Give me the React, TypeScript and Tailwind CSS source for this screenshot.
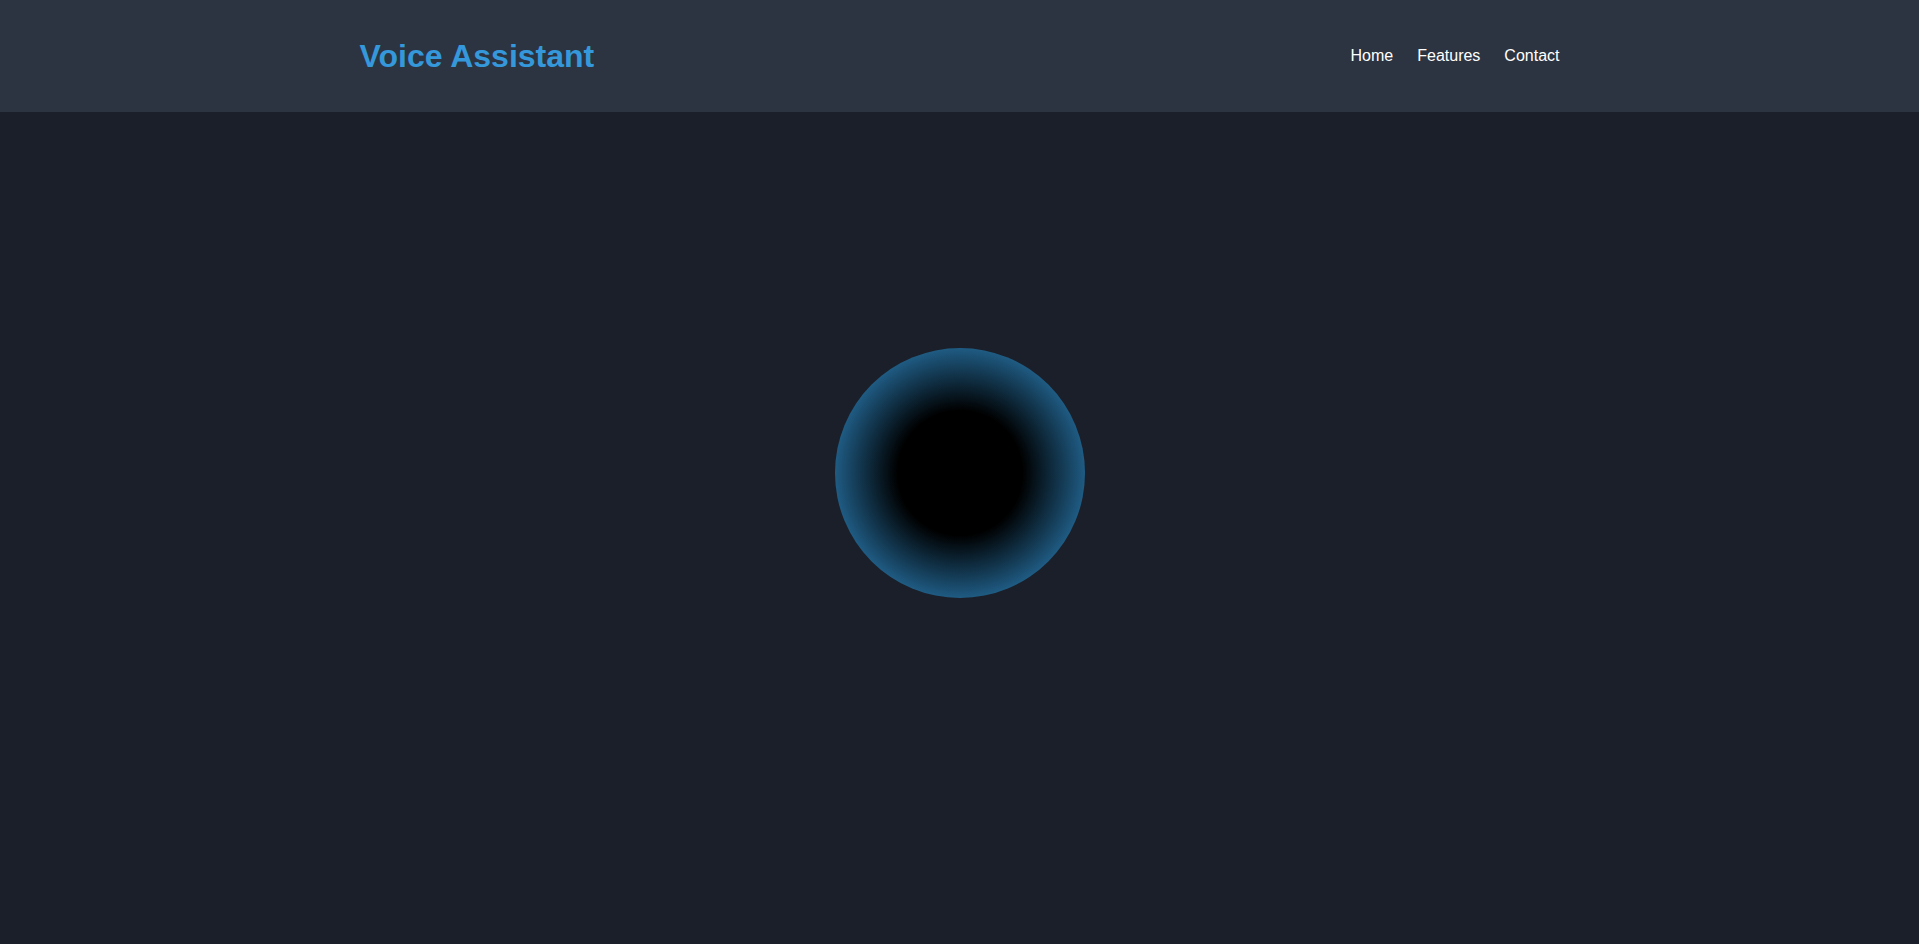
export default function App() {
  return (
    <div className="min-h-screen bg-[#1a1f29] font-['Liberation_Sans',Arial,sans-serif]">
      <header className="bg-[#2d3441] h-[112px] flex items-center">
        <div className="w-[1200px] mx-auto flex items-center justify-between">
          <h1 className="text-[32px] font-bold text-[#3498db] leading-none">Voice Assistant</h1>
          <nav className="flex gap-6 text-[16px] text-white">
            <a href="#">Home</a>
            <a href="#">Features</a>
            <a href="#">Contact</a>
          </nav>
        </div>
      </header>
      <main className="h-[722px] flex items-center justify-center">
        <div className="w-[250px] h-[250px] rounded-full bg-[radial-gradient(circle_closest-side,#000_50%,#1f5b83_100%)]" />
      </main>
    </div>
  );
}
